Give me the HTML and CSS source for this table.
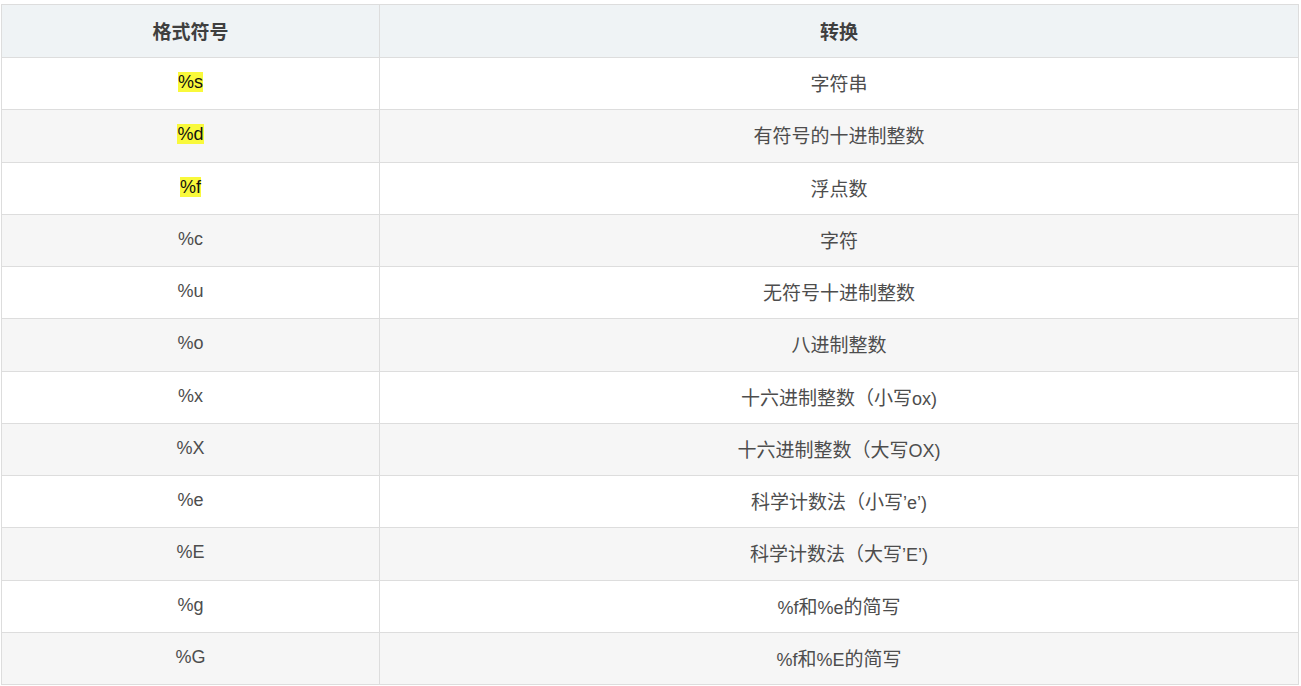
FILE: index.html
```html
<!DOCTYPE html>
<html lang="zh">
<head>
<meta charset="utf-8">
<title>格式符号</title>
<link rel="stylesheet" href="styles.css">
</head>
<body>
<table class="fmt-table">
  <thead>
    <tr><th class="col-sym"><span class="cjk">格式符号</span></th><th><span class="cjk">转换</span></th></tr>
  </thead>
  <tbody>
    <tr><td><mark class="hl">%s</mark></td><td><span class="cjk">字符串</span></td></tr>
    <tr><td><mark class="hl">%d</mark></td><td><span class="cjk">有符号的十进制整数</span></td></tr>
    <tr><td><mark class="hl">%f</mark></td><td><span class="cjk">浮点数</span></td></tr>
    <tr><td>%c</td><td><span class="cjk">字符</span></td></tr>
    <tr><td>%u</td><td><span class="cjk">无符号十进制整数</span></td></tr>
    <tr><td>%o</td><td><span class="cjk">八进制整数</span></td></tr>
    <tr><td>%x</td><td><span class="cjk">十六进制整数（小写</span>ox)</td></tr>
    <tr><td>%X</td><td><span class="cjk">十六进制整数（大写</span>OX)</td></tr>
    <tr><td>%e</td><td><span class="cjk">科学计数法（小写</span>’e’)</td></tr>
    <tr><td>%E</td><td><span class="cjk">科学计数法（大写</span>’E’)</td></tr>
    <tr><td>%g</td><td>%f<span class="cjk">和</span>%e<span class="cjk">的简写</span></td></tr>
    <tr><td>%G</td><td>%f<span class="cjk">和</span>%E<span class="cjk">的简写</span></td></tr>
  </tbody>
</table>
</body>
</html>
```
FILE: styles.css
```css
html, body {
  margin: 0;
  padding: 0;
  background: #ffffff;
}
body {
  padding: 4px 0 0 1px;
  font-family: "Liberation Sans", "Noto Sans CJK SC", sans-serif;
  color: #4d4d4d;
}
.fmt-table {
  border-collapse: collapse;
  width: 1298px;
  table-layout: fixed;
  font-size: 18px;
}
.fmt-table th,
.fmt-table td {
  border: 1px solid #dddddd;
  text-align: center;
  vertical-align: middle;
  padding: 0 8px 2px;
  height: 49.25px;
}
.fmt-table th {
  height: 50px;
  background: #eff3f5;
  font-weight: bold;
  color: #3f3f3f;
}
.fmt-table .col-sym {
  width: 361px;
}
.fmt-table tbody tr:nth-child(even) td {
  background: #f6f6f6;
}
.cjk {
  font-size: 19px;
}
.hl {
  background: #f9f93b;
  color: #111111;
  padding: 0;
}
```
